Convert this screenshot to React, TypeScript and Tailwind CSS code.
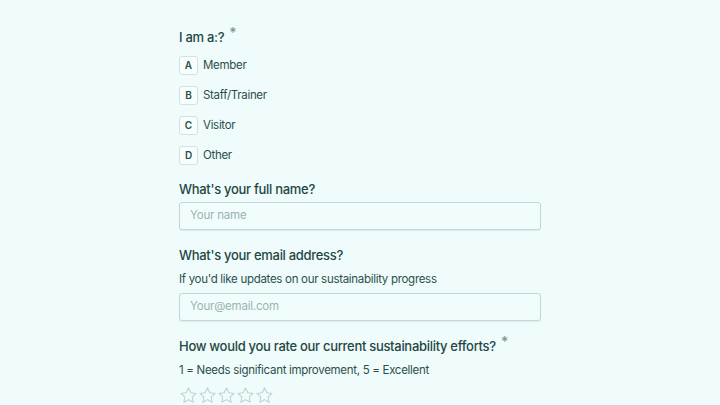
const options = [
  { key: "A", label: "Member" },
  { key: "B", label: "Staff/Trainer" },
  { key: "C", label: "Visitor" },
  { key: "D", label: "Other" },
]

function Star() {
  return (
    <svg viewBox="0 0 24 24" className="w-[19px] h-[19px]" fill="none" stroke="#b9d3d0" strokeWidth="1.3" strokeLinejoin="round">
      <polygon points="12 2.5 14.9 8.6 21.5 9.4 16.6 13.9 17.9 20.5 12 17.2 6.1 20.5 7.4 13.9 2.5 9.4 9.1 8.6" />
    </svg>
  )
}

export default function App() {
  return (
    <div className="w-[720px] h-[405px] overflow-hidden bg-[#effcfb] text-[#1f4744] font-['Inter',sans-serif]">
      <div className="w-[362px] ml-[179px] pt-[27px]">
        <h2 className="text-[13px] tracking-[-0.3px] font-medium leading-5 flex items-start">
          I am a:?
          <span className="ml-[5px] text-[#7d9895] text-[14px] leading-[14px] -mt-[1px]">*</span>
        </h2>
        <div className="mt-[9px] flex flex-col gap-[11px]">
          {options.map((o) => (
            <div key={o.key} className="flex items-center gap-[5px]">
              <span className="w-[19px] h-[19px] grid place-items-center rounded-[3px] border border-[#cfe3e1] bg-[#f7fefd] text-[10px] font-semibold text-[#2a4d4a]">
                {o.key}
              </span>
              <span className="text-[11.5px] tracking-[-0.3px] text-[#2c4f4c]">{o.label}</span>
            </div>
          ))}
        </div>

        <h2 className="mt-[14px] text-[13px] tracking-[-0.3px] font-medium leading-5">What's your full name?</h2>
        <div className="mt-[3px] h-[28px] rounded-[3px] border border-[#c3d8d6] bg-[#f1fdfc] shadow-[0_1px_1px_rgba(0,60,55,0.08)] flex items-center px-[10px] text-[11.5px] tracking-[-0.2px] text-[#9ab3b0]">
          Your name
        </div>

        <h2 className="mt-[15px] text-[13px] tracking-[-0.3px] font-medium leading-5">What's your email address?</h2>
        <p className="mt-[4px] text-[11.5px] tracking-[-0.3px] leading-5 text-[#2c4f4c]">If you'd like updates on our sustainability progress</p>
        <div className="mt-[4px] h-[28px] rounded-[3px] border border-[#c3d8d6] bg-[#f1fdfc] shadow-[0_1px_1px_rgba(0,60,55,0.08)] flex items-center px-[10px] text-[11.5px] tracking-[-0.2px] text-[#9ab3b0]">
          Your@email.com
        </div>

        <h2 className="mt-[15px] text-[13px] tracking-[-0.3px] font-medium leading-5 flex items-start whitespace-nowrap">
          How would you rate our current sustainability efforts?
          <span className="ml-[5px] text-[#7d9895] text-[14px] leading-[14px] -mt-[1px]">*</span>
        </h2>
        <p className="mt-[4px] text-[11.5px] tracking-[-0.3px] leading-5 text-[#2c4f4c]">1 = Needs significant improvement, 5 = Excellent</p>
        <div className="mt-[6px] flex">
          <Star />
          <Star />
          <Star />
          <Star />
          <Star />
        </div>
      </div>
    </div>
  )
}
